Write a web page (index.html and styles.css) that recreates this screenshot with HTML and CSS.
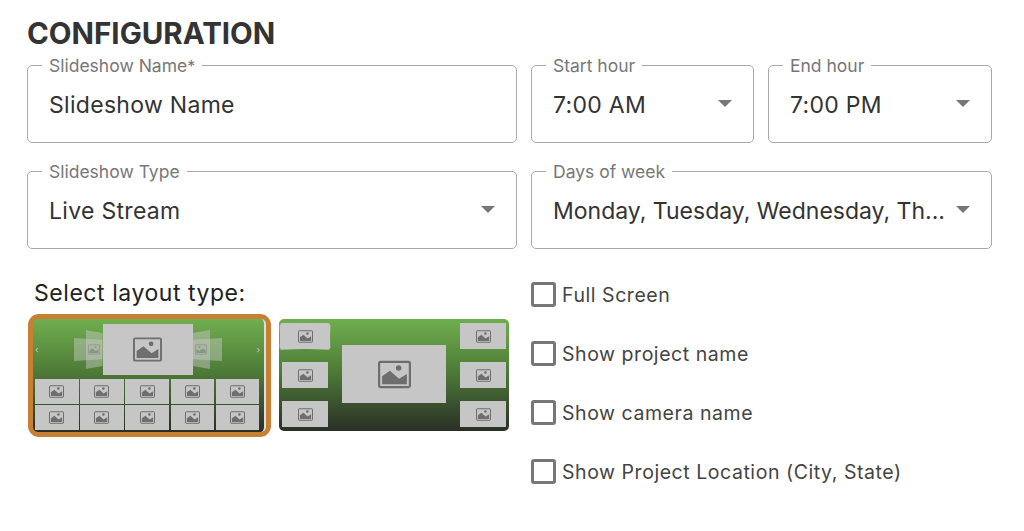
FILE: index.html
```html
<!DOCTYPE html>
<html lang="en">
<head>
  <meta charset="UTF-8">
  <meta name="viewport" content="width=device-width, initial-scale=1.0">
  <title>Configuration</title>
  <link rel="stylesheet" href="styles.css">
</head>
<body>
  <svg class="icon-defs" width="0" height="0">
    <symbol id="pic" viewBox="0 0 36 30">
      <rect x="1.2" y="1.2" width="33.6" height="27.6" rx="1.5" fill="none" stroke="currentColor" stroke-width="2.4"/>
      <circle cx="22.500" cy="8" r="3" fill="currentColor"/>
      <path d="M4.500 25.500V17L13 11 23 19.500 31.500 14.500V25.500Z" fill="currentColor"/>
    </symbol>
  </svg>

  <h1 class="title">CONFIGURATION</h1>

  <div class="form-grid">
    <div class="field">
      <span class="field-label">Slideshow Name<span class="star">*</span></span>
      <span class="field-value">Slideshow Name</span>
    </div>
    <div class="hours">
      <div class="field">
        <span class="field-label">Start hour</span>
        <span class="field-value">7:00 AM</span>
        <span class="caret"></span>
      </div>
      <div class="field">
        <span class="field-label">End hour</span>
        <span class="field-value">7:00 PM</span>
        <span class="caret"></span>
      </div>
    </div>
    <div class="field">
      <span class="field-label">Slideshow Type</span>
      <span class="field-value">Live Stream</span>
      <span class="caret"></span>
    </div>
    <div class="field">
      <span class="field-label">Days of week</span>
      <span class="field-value field-value-days">Monday, Tuesday, Wednesday, Th...</span>
      <span class="caret"></span>
    </div>
  </div>

  <div class="bottom">
    <div class="layouts">
      <div class="layouts-title">Select layout type:</div>
      <div class="layouts-row">
        <div class="layout-frame">
          <div class="thumb thumb-carousel">
            <div class="stage">
              <span class="chev">‹</span>
              <div class="side side-left">
                <div class="ghost ghost-far"></div>
                <div class="ghost ghost-near"><svg class="pic pic-xs"><use href="#pic"/></svg></div>
              </div>
              <div class="cell cell-main"><svg class="pic pic-l"><use href="#pic"/></svg></div>
              <div class="side side-right">
                <div class="ghost ghost-far"></div>
                <div class="ghost ghost-near"><svg class="pic pic-xs"><use href="#pic"/></svg></div>
              </div>
              <span class="chev chev-right">›</span>
            </div>
            <div class="cell-grid">
              <div class="cell"><svg class="pic pic-s"><use href="#pic"/></svg></div>
              <div class="cell"><svg class="pic pic-s"><use href="#pic"/></svg></div>
              <div class="cell"><svg class="pic pic-s"><use href="#pic"/></svg></div>
              <div class="cell"><svg class="pic pic-s"><use href="#pic"/></svg></div>
              <div class="cell"><svg class="pic pic-s"><use href="#pic"/></svg></div>
              <div class="cell"><svg class="pic pic-s"><use href="#pic"/></svg></div>
              <div class="cell"><svg class="pic pic-s"><use href="#pic"/></svg></div>
              <div class="cell"><svg class="pic pic-s"><use href="#pic"/></svg></div>
              <div class="cell"><svg class="pic pic-s"><use href="#pic"/></svg></div>
              <div class="cell"><svg class="pic pic-s"><use href="#pic"/></svg></div>
            </div>
          </div>
        </div>
        <div class="thumb thumb-columns">
          <div class="col">
            <div class="cell cell-stacked"><svg class="pic pic-s"><use href="#pic"/></svg></div>
            <div class="cell"><svg class="pic pic-s"><use href="#pic"/></svg></div>
            <div class="cell"><svg class="pic pic-s"><use href="#pic"/></svg></div>
          </div>
          <div class="cell cell-center"><svg class="pic pic-xl"><use href="#pic"/></svg></div>
          <div class="col">
            <div class="cell"><svg class="pic pic-s"><use href="#pic"/></svg></div>
            <div class="cell"><svg class="pic pic-s"><use href="#pic"/></svg></div>
            <div class="cell"><svg class="pic pic-s"><use href="#pic"/></svg></div>
          </div>
        </div>
      </div>
    </div>

    <div class="options">
      <label class="option"><span class="check"></span>Full Screen</label>
      <label class="option"><span class="check"></span>Show project name</label>
      <label class="option"><span class="check"></span>Show camera name</label>
      <label class="option"><span class="check"></span>Show Project Location (City, State)</label>
    </div>
  </div>
</body>
</html>
```

FILE: styles.css
```css
* {
  box-sizing: border-box;
  margin: 0;
  padding: 0;
}
body {
  font-family: Inter, "Liberation Sans", sans-serif;
  background: #fff;
  color: #333;
  width: 1024px;
  height: 531px;
  overflow: hidden;
  padding: 0 32px 0 27px;
}
.icon-defs {
  position: absolute;
}
.title {
  font-size: 29.5px;
  font-weight: 700;
  line-height: 36px;
  height: 65px;
  padding-top: 15px;
  color: #333;
}
.form-grid {
  display: grid;
  grid-template-columns: 490px 461px;
  column-gap: 14px;
  row-gap: 28px;
}
.hours {
  display: grid;
  grid-template-columns: 223px 224px;
  column-gap: 14px;
}
.field {
  position: relative;
  display: flex;
  align-items: center;
  height: 78px;
  padding: 2px 44px 0 21px;
  border: 1.5px solid #aaa;
  border-radius: 5px;
}
.field-label {
  position: absolute;
  top: -10px;
  left: 14px;
  padding: 0 7px;
  background: #fff;
  font-size: 17.5px;
  line-height: 20px;
  color: #777;
}
.star {
  font-size: 16px;
}
.field-value {
  font-size: 23px;
  letter-spacing: 0.3px;
  color: #333;
  white-space: nowrap;
}
.field-value-days {
  letter-spacing: 0;
}
.caret {
  position: absolute;
  right: 21px;
  top: 34px;
  border-left: 7px solid transparent;
  border-right: 7px solid transparent;
  border-top: 7px solid #777;
}
.bottom {
  display: grid;
  grid-template-columns: 490px 461px;
  column-gap: 14px;
  padding-top: 33px;
}
.layouts {
  padding-left: 1px;
  margin-top: -2px;
}
.layouts-title {
  font-size: 23px;
  letter-spacing: 0.55px;
  line-height: 26px;
  padding-left: 6px;
  color: #222;
}
.layouts-row {
  display: flex;
  align-items: flex-start;
  gap: 8px;
  margin-top: 8px;
}
.layout-frame {
  width: 243px;
  height: 123px;
  padding: 5px;
  border-radius: 11px;
  background: #c77f33;
}
.thumb {
  border-radius: 5px;
  background: linear-gradient(180deg, #6fae4e 0%, #4f7d38 45%, #2a2f26 100%);
  color: #6e6e6e;
}
.thumb-carousel {
  width: 233px;
  height: 113px;
  padding: 5px 4px 1px 2px;
  border-right: 2px solid #ddd;
}
.stage {
  display: flex;
  align-items: center;
  height: 51px;
}
.chev {
  flex: 1;
  font-size: 9px;
  color: #ccc;
}
.chev-right {
  text-align: right;
}
.cell {
  display: flex;
  align-items: center;
  justify-content: center;
  background: #c6c6c6;
}
.cell-main {
  flex: none;
  width: 90px;
  height: 51px;
}
.side {
  position: relative;
  flex: none;
  width: 30px;
  height: 39px;
}
.ghost {
  position: absolute;
  display: flex;
  align-items: center;
  justify-content: center;
  background: rgba(205, 205, 205, 0.45);
  color: rgba(110, 110, 110, 0.5);
}
.ghost-near {
  top: 0;
  width: 17px;
  height: 39px;
  clip-path: polygon(0 0, 100% 8%, 100% 92%, 0 100%);
}
.ghost-far {
  top: 8px;
  width: 29px;
  height: 23px;
  clip-path: polygon(0 0, 100% 8%, 100% 92%, 0 100%);
}
.side-left .ghost {
  right: 0;
}
.side-right .ghost {
  left: 0;
  transform: scaleX(-1);
}
.cell-grid {
  display: grid;
  grid-template-columns: repeat(5, 43.5px);
  grid-auto-rows: 25px;
  gap: 1px 1.7px;
  margin-top: 4px;
}
.pic {
  display: block;
  position: relative;
  z-index: 1;
}
.pic-xs {
  width: 12px;
  height: 11px;
}
.pic-s {
  width: 15px;
  height: 13px;
}
.pic-l {
  width: 29px;
  height: 25px;
}
.pic-xl {
  width: 33px;
  height: 29px;
}
.thumb-columns {
  display: flex;
  justify-content: space-between;
  align-items: center;
  width: 230px;
  height: 112px;
  margin-top: 5px;
  padding: 4px 3px;
}
.col {
  display: flex;
  flex-direction: column;
  justify-content: space-between;
  width: 46px;
  height: 100%;
}
.col .cell {
  height: 26px;
}
.cell-stacked {
  position: relative;
}
.cell-stacked::before,
.cell-stacked::after {
  content: "";
  position: absolute;
  inset: 1px -2px 0 -2px;
  background: #c6c6c6;
  transform: rotate(2deg);
}
.cell-stacked::after {
  transform: rotate(-2deg);
}
.cell-center {
  width: 104px;
  height: 58px;
  margin-bottom: 2px;
}
.options {
  display: flex;
  flex-direction: column;
  gap: 34px;
}
.option {
  display: flex;
  align-items: center;
  gap: 6px;
  height: 25px;
  font-size: 19.5px;
  letter-spacing: 0.55px;
  color: #444;
}
.check {
  flex: none;
  width: 25px;
  height: 25px;
  border: 3px solid #777;
  border-radius: 3px;
}
```
